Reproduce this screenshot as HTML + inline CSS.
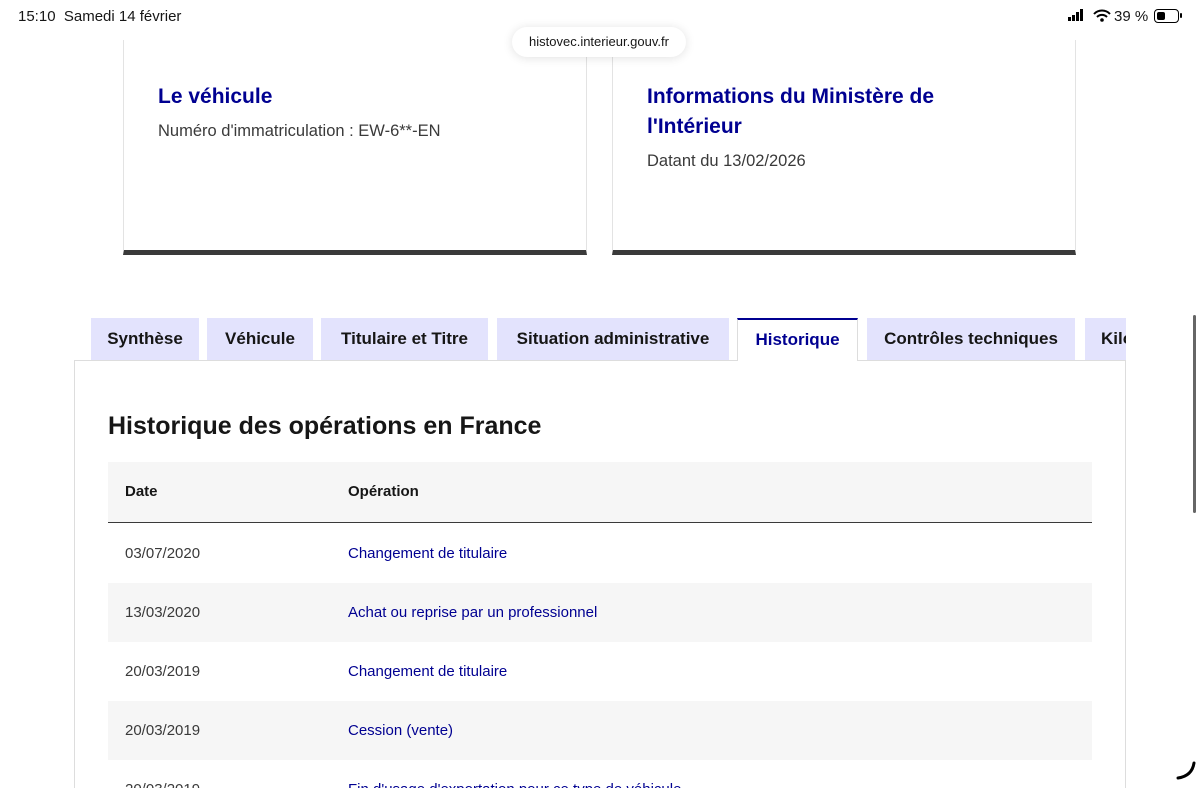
<!DOCTYPE html>
<html><head><meta charset="utf-8"><style>
*{margin:0;padding:0;box-sizing:border-box}
html,body{width:1200px;height:788px;overflow:hidden}
body{background:#fff;font-family:"Liberation Sans",sans-serif;position:relative;color:#161616}
.a{position:absolute}
.card{position:absolute;top:40px;height:215px;border:1px solid #e3e3e3;border-top:none;border-bottom:5px solid #3a3a3a;background:#fff}
.card h2{color:#000091;font-size:21px;font-weight:bold;line-height:30px}
.card p{font-size:16.5px;color:#3a3a3a}
.tab{position:absolute;top:318px;height:42px;background:#e3e3fd;font-weight:bold;font-size:17px;line-height:42px;text-align:center;white-space:nowrap;overflow:hidden;color:#161616}
.row{position:absolute;left:108px;width:984px;height:59px;font-size:15px;line-height:59px}
.row .d{position:absolute;left:17px;color:#3a3a3a}
.row .o{position:absolute;left:240px;color:#000091}
.g{background:#f6f6f6}
</style></head><body>
<div class="a" style="left:18px;top:8px;font-size:15px">15:10&nbsp;&nbsp;Samedi 14 février</div>
<div class="a" style="left:1068px;top:9px;width:22px;height:12px">
<div class="a" style="left:0;top:8px;width:3px;height:4px;background:#000"></div>
<div class="a" style="left:4px;top:6px;width:3px;height:6px;background:#000"></div>
<div class="a" style="left:8px;top:3px;width:3px;height:9px;background:#000"></div>
<div class="a" style="left:12px;top:0;width:3px;height:12px;background:#000"></div></div>
<svg class="a" style="left:1093px;top:9px" width="18" height="13" viewBox="0 0 18 13"><path d="M1 5a11 11 0 0 1 16 0M4 8a7 7 0 0 1 10 0" stroke="#000" stroke-width="2" fill="none"/><circle cx="9" cy="11" r="1.8"/></svg>
<div class="a" style="left:1114px;top:8px;font-size:15px">39 %</div>
<div class="a" style="left:1154px;top:9px;width:25px;height:14px;border:1.5px solid #000;border-radius:4px"><div style="margin:1.5px;width:8px;height:8px;background:#000;border-radius:2px"></div></div>
<div class="a" style="left:1180px;top:13px;width:2px;height:5px;background:#000;border-radius:1px"></div>

<div class="card" style="left:123px;width:464px"><div style="padding:42px 0 0 34px"><h2>Le véhicule</h2><p style="margin-top:10px">Numéro d'immatriculation : EW-6**-EN</p></div></div>
<div class="card" style="left:612px;width:464px"><div style="padding:42px 0 0 34px"><h2>Informations du Ministère de<br>l'Intérieur</h2><p style="margin-top:10px">Datant du 13/02/2026</p></div></div>

<div class="a" style="left:512px;top:27px;width:174px;height:30px;background:#fff;border-radius:15px;box-shadow:0 1px 10px rgba(0,0,0,.12);font-size:13px;text-align:center;line-height:30px">histovec.interieur.gouv.fr</div>

<div class="a" style="left:74px;top:360px;width:1052px;height:440px;border:1px solid #ddd"></div>
<div class="tab" style="left:91px;width:108px">Synthèse</div>
<div class="tab" style="left:207px;width:106px">Véhicule</div>
<div class="tab" style="left:321px;width:167px">Titulaire et Titre</div>
<div class="tab" style="left:497px;width:232px">Situation administrative</div>
<div class="tab" style="left:737px;width:121px;height:43px;background:#fff;border-top:2px solid #000091;border-left:1px solid #ddd;border-right:1px solid #ddd;color:#000091;line-height:40px">Historique</div>
<div class="tab" style="left:867px;width:208px">Contrôles techniques</div>
<div class="tab" style="left:1085px;width:41px;text-align:left;padding-left:16px">Kilométrage</div>

<div class="a" style="left:108px;top:412px;font-size:25px;font-weight:bold">Historique des opérations en France</div>
<div class="row g" style="top:462px;height:61px;border-bottom:1px solid #3a3a3a;font-weight:bold"><span class="d" style="color:#161616">Date</span><span class="o" style="color:#161616">Opération</span></div>
<div class="row" style="top:524px"><span class="d">03/07/2020</span><span class="o">Changement de titulaire</span></div>
<div class="row g" style="top:583px"><span class="d">13/03/2020</span><span class="o">Achat ou reprise par un professionnel</span></div>
<div class="row" style="top:642px"><span class="d">20/03/2019</span><span class="o">Changement de titulaire</span></div>
<div class="row g" style="top:701px"><span class="d">20/03/2019</span><span class="o">Cession (vente)</span></div>
<div class="row" style="top:760px;height:28px;overflow:hidden"><span class="d" style="top:0">20/03/2019</span><span class="o" style="top:0">Fin d'usage d'exportation pour ce type de véhicule</span></div>

<div class="a" style="left:1193px;top:315px;width:3px;height:198px;background:#666;border-radius:2px"></div>
<svg class="a" style="left:1174px;top:760px" width="22" height="22"><path d="M20 3 Q18 16 4 18" stroke="#000" stroke-width="3" fill="none" stroke-linecap="round"/></svg>
</body></html>
